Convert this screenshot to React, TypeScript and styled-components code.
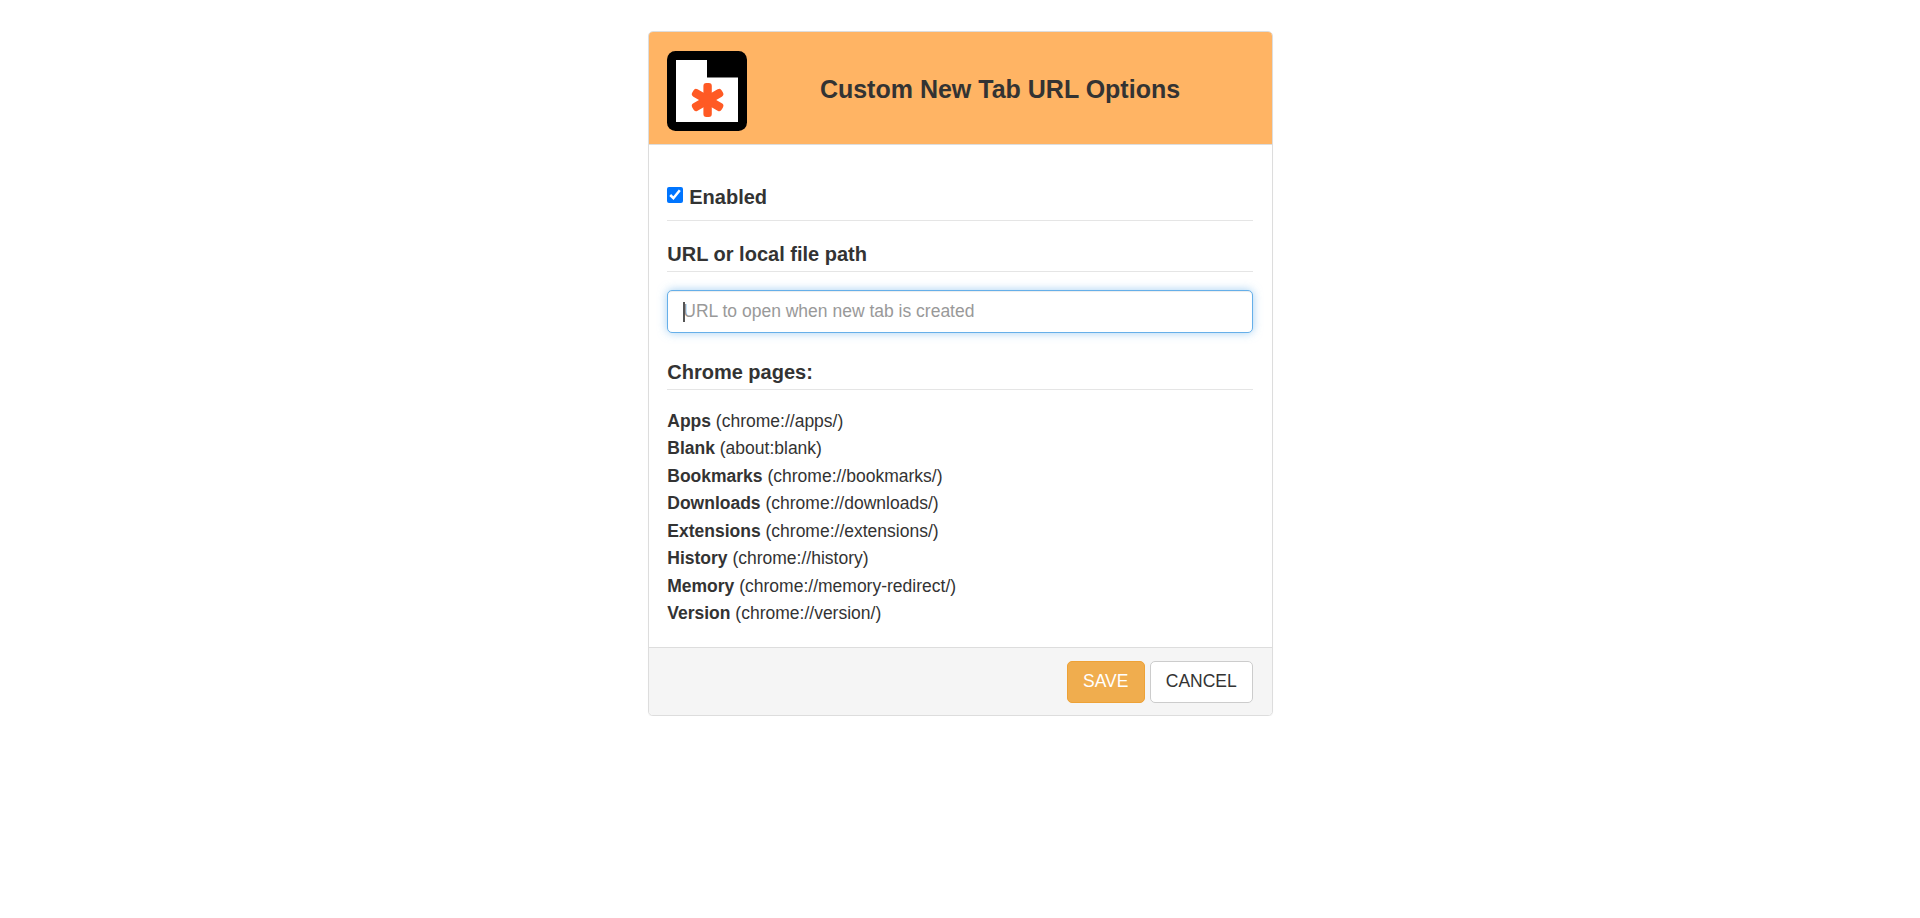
import React from 'react';
import styled, { createGlobalStyle } from 'styled-components';

const GlobalStyle = createGlobalStyle`
  *, *::before, *::after { box-sizing: border-box; }
  body {
    margin: 0;
    background: #fff;
    color: #333;
    font-family: "Liberation Sans", Arial, Helvetica, sans-serif;
    font-size: 17.5px;
    line-height: 25px;
  }
`;

const Page = styled.main`
  display: flex;
  justify-content: center;
  padding-top: 31px;
`;

const Panel = styled.form`
  width: 625px;
  background: #fff;
  border: 1px solid #ddd;
  border-radius: 5px;
  box-shadow: 0 1px 1px rgba(0, 0, 0, 0.05);
`;

const Header = styled.header`
  display: flex;
  height: 113px;
  padding: 19px 18.75px 0;
  background: #ffb464;
  border-bottom: 1px solid #ddd;
  border-radius: 4px 4px 0 0;
`;

const Logo = styled.svg`
  flex: none;
  width: 80px;
  height: 80px;
`;

const Title = styled.h1`
  flex: 1;
  margin: 25px 0 0;
  font-size: 25px;
  line-height: 27px;
  text-align: center;
`;

const Body = styled.section`
  padding: 34px 18.75px 19.4px;
`;

const Heading = styled.h2<{ $height: number; $top?: number }>`
  height: ${(p) => p.$height}px;
  margin: 0;
  padding-top: ${(p) => p.$top ?? 0}px;
  border-bottom: 1px solid #e5e5e5;
  font-size: 20px;
  line-height: 24px;
`;

const EnabledLabel = styled.label`
  display: flex;
  align-items: flex-start;
  gap: 6px;
`;

const Checkbox = styled.input`
  width: 16px;
  height: 16px;
  margin: 2px 0 0;
  accent-color: #0075ff;
`;

const UrlField = styled.div`
  position: relative;
  margin-top: 18px;
`;

const UrlInput = styled.input`
  display: block;
  width: 100%;
  height: 43px;
  padding: 7px 15px 8px;
  border: 1px solid #66afe9;
  border-radius: 5px;
  outline: 0;
  color: #555;
  font: inherit;
  box-shadow: inset 0 1px 1px rgba(0, 0, 0, 0.075), 0 0 10px rgba(102, 175, 233, 0.6);

  &::placeholder {
    color: #999;
    opacity: 1;
  }
`;

const Caret = styled.span`
  position: absolute;
  top: 12px;
  left: 16px;
  width: 2px;
  height: 20px;
  background: #555;
`;

const PageList = styled.ul`
  margin: 17.6px 0 0;
  padding: 0;
  list-style: none;
`;

const PageItem = styled.li`
  height: 27.5px;
  line-height: 27.5px;
`;

const Footer = styled.footer`
  display: flex;
  justify-content: flex-end;
  gap: 5px;
  height: 68px;
  padding: 13px 18.75px 0;
  background: #f5f5f5;
  border-top: 1px solid #ddd;
  border-radius: 0 0 4px 4px;
`;

const Button = styled.button<{ $primary?: boolean }>`
  width: ${(p) => (p.$primary ? 78 : 103)}px;
  height: 42px;
  padding: 0;
  border: 1px solid ${(p) => (p.$primary ? '#eea236' : '#ccc')};
  border-radius: 5px;
  background: ${(p) => (p.$primary ? '#f0ad4e' : '#fff')};
  color: ${(p) => (p.$primary ? '#fff' : '#333')};
  font: inherit;
  text-transform: uppercase;
`;

const chromePages = [
  { name: 'Apps', url: 'chrome://apps/' },
  { name: 'Blank', url: 'about:blank' },
  { name: 'Bookmarks', url: 'chrome://bookmarks/' },
  { name: 'Downloads', url: 'chrome://downloads/' },
  { name: 'Extensions', url: 'chrome://extensions/' },
  { name: 'History', url: 'chrome://history' },
  { name: 'Memory', url: 'chrome://memory-redirect/' },
  { name: 'Version', url: 'chrome://version/' },
];

export default function App() {
  return (
    <>
      <GlobalStyle />
      <Page>
        <Panel>
          <Header>
            <Logo viewBox="0 0 80 80" aria-hidden="true">
              <rect width="80" height="80" rx="8.5" />
              <path d="M9 9H40V26.5H71V71H9Z" fill="#fff" />
              <g fill="#ff5a24">
                {[0, 60, 120].map((angle) => (
                  <rect
                    key={angle}
                    x="36.4"
                    y="32"
                    width="8.4"
                    height="34"
                    rx="3"
                    transform={`rotate(${angle} 40.6 49)`}
                  />
                ))}
              </g>
            </Logo>
            <Title>Custom New Tab URL Options</Title>
          </Header>
          <Body>
            <Heading $height={42} $top={6}>
              <EnabledLabel>
                <Checkbox type="checkbox" defaultChecked />
                Enabled
              </EnabledLabel>
            </Heading>
            <Heading $height={51} $top={21}>URL or local file path</Heading>
            <UrlField>
              <UrlInput type="text" placeholder="URL to open when new tab is created" />
              <Caret />
            </UrlField>
            <Heading $height={57} $top={27}>Chrome pages:</Heading>
            <PageList>
              {chromePages.map(({ name, url }) => (
                <PageItem key={name}>
                  <strong>{name}</strong> ({url})
                </PageItem>
              ))}
            </PageList>
          </Body>
          <Footer>
            <Button type="button" $primary>Save</Button>
            <Button type="button">Cancel</Button>
          </Footer>
        </Panel>
      </Page>
    </>
  );
}
